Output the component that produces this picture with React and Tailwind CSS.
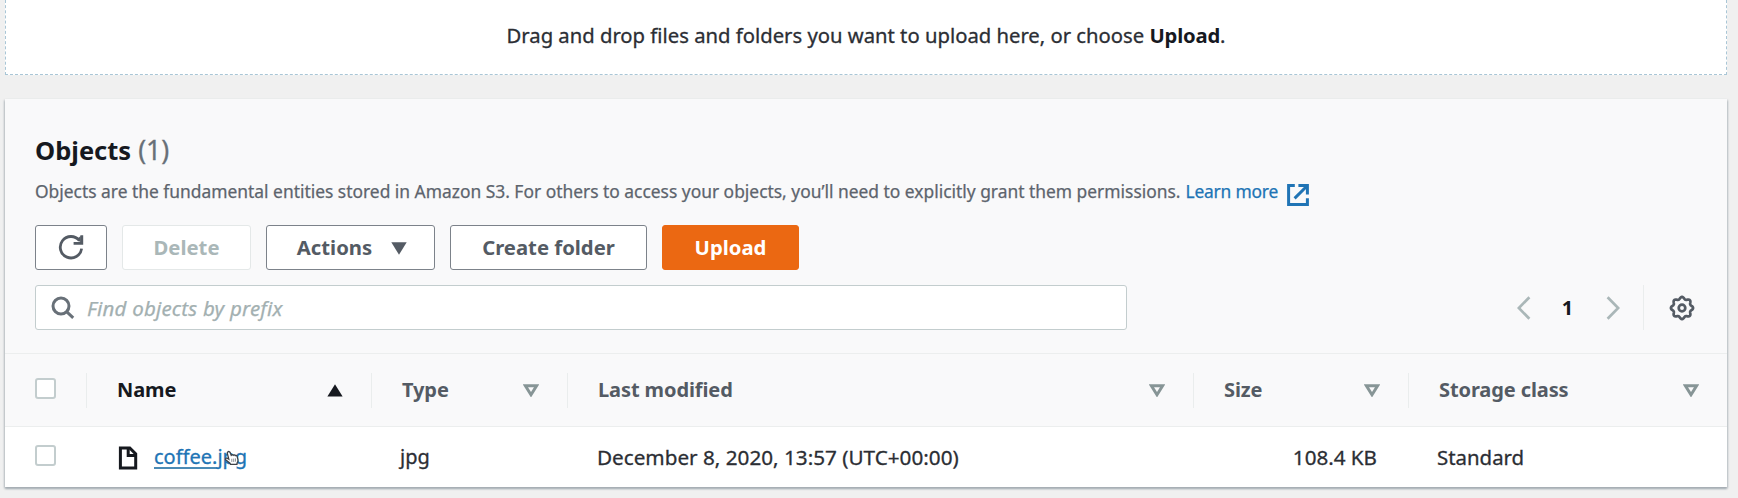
import React from "react";

function RefreshIcon() {
  return (
    <svg className="h-[26px] w-[26px]" viewBox="0 0 26 26" fill="none" stroke="#545b64" strokeWidth="2.8">
      <path d="M23.6 14.6A10.7 10.7 0 1 1 21.4 6.6" />
      <path d="M23.8 1.2v8.2h-8.2" />
      <path d="M19.2 5.2l3.6 3.6v-7z" fill="#545b64" stroke="none" />
    </svg>
  );
}

function SearchIcon() {
  return (
    <svg className="h-[24px] w-[24px]" viewBox="0 0 24 24" fill="none" stroke="#687078" strokeWidth="3">
      <circle cx="10" cy="10" r="8" />
      <path d="M15.6 15.6l6.6 6.2" />
    </svg>
  );
}

function ExternalIcon() {
  return (
    <svg className="h-[24px] w-[24px]" viewBox="0 0 24 24" fill="none" stroke="#2074b5" strokeWidth="3">
      <path d="M8.8 2.6H2.6v18.8h18.8v-6.2" />
      <path d="M12.4 2.6h9v9" />
      <path d="M21 3L8.6 15.4" />
    </svg>
  );
}

function FileIcon() {
  return (
    <svg className="h-[24px] w-[20px]" viewBox="0 0 20 24" fill="none" stroke="#16191f" strokeWidth="3">
      <path d="M2.4 1.9h9.4l5.9 6v14.2H2.4z" />
      <path d="M10.2 2v7.4h7.4" />
    </svg>
  );
}

const gearPoints = Array.from({ length: 96 }, (_, i) => {
  const a = (i / 96) * Math.PI * 2;
  const r = 10 + 1.1 * Math.cos(a * 8);
  return `${(13 + r * Math.cos(a)).toFixed(2)},${(13 + r * Math.sin(a)).toFixed(2)}`;
}).join(" ");

function GearIcon() {
  return (
    <svg className="h-[26px] w-[26px]" viewBox="0 0 26 26" fill="none" stroke="#545b64" strokeWidth="2.7">
      <polygon points={gearPoints} strokeLinejoin="round" />
      <circle cx="13" cy="13" r="3.3" />
    </svg>
  );
}

function Chevron({ dir }) {
  return (
    <svg className="h-[24px] w-[14px]" viewBox="0 0 14 24" fill="none" stroke="#aab7b8" strokeWidth="2.7">
      <path d={dir === "left" ? "M12.4 1.2L1.8 12l10.6 10.8" : "M1.6 1.2L12.2 12L1.6 22.8"} />
    </svg>
  );
}

function SortIcon({ active }) {
  return active ? (
    <svg className="h-[13px] w-[16px]" viewBox="0 0 16 13">
      <path d="M8 0.3L15.6 12.6H0.4z" fill="#16191f" />
    </svg>
  ) : (
    <svg className="h-[13px] w-[16px]" viewBox="0 0 16 13">
      <path d="M2.4 1.8h11.2L8 10.8z" fill="none" stroke="#879596" strokeWidth="2.9" />
    </svg>
  );
}

function HandCursor() {
  return (
    <svg className="absolute left-[70px] top-[7px] h-[17px] w-[16px]" viewBox="0 0 18 19">
      <path
        d="M4.4 2c.9-.7 2-.3 2.4.6l1.3 3.2c.7-.8 1.8-.7 2.3 0 .8-.6 1.8-.4 2.3.4.9-.4 1.8 0 2.1.9l.9 3.6c.3 1.4-.1 2.6-.9 3.7l-.3 1.8H7.4l-.7-1.4-4.5-3.6c-1.2-1.1-.1-2.6 1.3-2l1.9 1L3.8 4c-.3-.8-.1-1.5.6-2z"
        fill="#fff"
        stroke="#3d4147"
        strokeWidth="1.5"
      />
      <path d="M8.8 9.8v3.6M10.9 9.6v3.8M12.9 9.4v3.6" stroke="#7d8287" strokeWidth="1" fill="none" />
    </svg>
  );
}

function Checkbox() {
  return <span className="mb-[3px] block h-[21px] w-[21px] rounded-[3px] border-2 border-[#c3cdce] bg-white" />;
}

function HeadCell({ label, active, className }) {
  return (
    <div className={`flex h-[35px] items-center justify-between border-l border-[#eaeded] ${className}`}>
      <span className={`text-[20px] leading-[28px] font-bold tracking-[-0.1px] whitespace-nowrap ${active ? "text-[#16191f]" : "text-[#545b64]"}`}>{label}</span>
      <SortIcon active={active} />
    </div>
  );
}

const button = "flex h-[45px] shrink-0 items-center justify-center rounded-[3px] border-[1.5px] pb-px text-[20.3px] leading-[28px] font-bold whitespace-nowrap";

export default function App() {
  return (
    <div className="h-[498px] w-[1738px] overflow-hidden bg-[#f0f0f0] pl-[5px] font-['Noto_Sans',sans-serif] text-[#16191f]">
      <div className="flex h-[75px] w-[1722px] justify-center border border-t-0 border-dashed border-[#a9c6d6] bg-white pt-[21px] text-[20.25px] leading-[28px] text-[#2b2e34] [-webkit-text-stroke:0.3px]">
        <p className="whitespace-pre">
          Drag and drop files and folders you want to upload here, or choose <b className="tracking-[-0.2px] text-[#16191f] [-webkit-text-stroke:0]">Upload</b>.
        </p>
      </div>

      <section className="mt-[24px] h-[388px] w-[1722px] bg-[#f9f9fa] shadow-[0_2px_2px_0_#a5adb3,1px_1px_2px_0_#c8cccf,-1px_1px_2px_0_#c8cccf]">
        <div className="h-[254px] px-[30px] pt-[33px]">
          <h2 className="flex text-[25.5px] leading-[36px] font-bold">
            Objects <span className="ml-[7px] text-[26.5px] font-normal text-[#687078] [-webkit-text-stroke:0.3px]">(1)</span>
          </h2>
          <div className="mt-[9px] flex h-[28px] items-center text-[17.4px] whitespace-nowrap text-[#5d646d] [-webkit-text-stroke:0.25px]">
            <p>
              Objects are the fundamental entities stored in Amazon S3. For others to access your objects, you’ll need to explicitly grant them permissions.
            </p>
            <a className="ml-[5px] tracking-[-0.2px] text-[#2074b5]">Learn more</a>
            <span className="mt-[7px] ml-[8px]">
              <ExternalIcon />
            </span>
          </div>

          <div className="mt-[20px] flex gap-[15px]">
            <button className={`${button} w-[72px] border-[#7c828a] bg-white`}>
              <RefreshIcon />
            </button>
            <button className={`${button} w-[129px] border-[#e4e8e8] bg-white text-[#aab7b8]`}>Delete</button>
            <button className={`${button} w-[169px] gap-[19px] border-[#7c828a] bg-white pl-[3px] text-[#545b64]`}>
              Actions
              <svg className="mt-[2px] h-[13px] w-[16px]" viewBox="0 0 16 13">
                <path d="M0.3 0.3h15.4L8 12.8z" fill="#545b64" />
              </svg>
            </button>
            <button className={`${button} w-[197px] border-[#7c828a] bg-white text-[#545b64]`}>Create folder</button>
            <button className={`${button} w-[137px] border-[#eb6812] bg-[#eb6812] text-white`}>Upload</button>
          </div>

          <div className="mt-[15px] flex h-[45px] items-center justify-between">
            <div className="flex h-[45px] w-[1092px] items-center gap-[12px] rounded-[3px] border-[1.5px] border-[#c3cdce] bg-white pl-[15px]">
              <SearchIcon />
              <span className="text-[20.5px] leading-[28px] tracking-[0.2px] text-[#a3b0b1] italic [-webkit-text-stroke:0.25px]">Find objects by prefix</span>
            </div>
            <div className="flex h-[45px] items-center pr-[2px]">
              <Chevron dir="left" />
              <span className="w-[75px] pr-[2px] text-center text-[20px] leading-[28px] font-bold">1</span>
              <Chevron dir="right" />
              <span className="ml-[23px] h-[45px] w-px bg-[#eaeded]" />
              <span className="ml-[25px]">
                <GearIcon />
              </span>
            </div>
          </div>
        </div>

        <div className="flex h-[74px] items-center border-y border-[#eceeee] pl-[30px]">
          <div className="w-[51px]">
            <Checkbox />
          </div>
          <HeadCell label="Name" active className="w-[285px] pr-[28px] pl-[30px]" />
          <HeadCell label="Type" className="w-[196px] pr-[28px] pl-[30px]" />
          <HeadCell label="Last modified" className="w-[626px] pr-[28px] pl-[30px]" />
          <HeadCell label="Size" className="w-[215px] pr-[28px] pl-[30px]" />
          <HeadCell label="Storage class" className="w-[319px] pr-[28px] pl-[30px]" />
        </div>

        <div className="flex h-[60px] items-center bg-white pl-[30px] text-[20px] leading-[28px] whitespace-nowrap [-webkit-text-stroke:0.3px]">
          <div className="w-[83px]">
            <Checkbox />
          </div>
          <div className="flex w-[282px] items-center gap-[16px]">
            <span className="pt-[2px]">
              <FileIcon />
            </span>
            <a className="relative text-[#2074b5]">
              <span className="underline decoration-[#4a8ab5] decoration-2 underline-offset-[3px]">coffee.</span>jpg
              <HandCursor />
            </a>
          </div>
          <div className="w-[197px] text-[#2b2e34]">jpg</div>
          <div className="w-[580px] text-[20.7px] text-[#2b2e34]">December 8, 2020, 13:57 (UTC+00:00)</div>
          <div className="w-[200px] text-right text-[20.6px] text-[#2b2e34]">108.4 KB</div>
          <div className="pl-[60px] text-[20.4px] text-[#2b2e34]">Standard</div>
        </div>
      </section>
    </div>
  );
}
